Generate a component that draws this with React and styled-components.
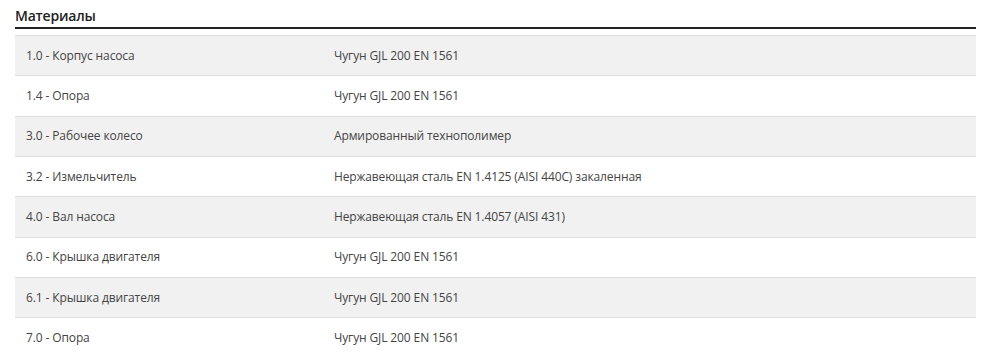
import React from "react";
import styled, { createGlobalStyle } from "styled-components";

const materials = [
  ["1.0 - Корпус насоса", "Чугун GJL 200 EN 1561"],
  ["1.4 - Опора", "Чугун GJL 200 EN 1561"],
  ["3.0 - Рабочее колесо", "Армированный технополимер"],
  ["3.2 - Измельчитель", "Нержавеющая сталь EN 1.4125 (AISI 440C) закаленная"],
  ["4.0 - Вал насоса", "Нержавеющая сталь EN 1.4057 (AISI 431)"],
  ["6.0 - Крышка двигателя", "Чугун GJL 200 EN 1561"],
  ["6.1 - Крышка двигателя", "Чугун GJL 200 EN 1561"],
  ["7.0 - Опора", "Чугун GJL 200 EN 1561"],
];

const App = () => {
  return (
    <>
      <GlobalStyle />
      <Section>
        <Heading>Материалы</Heading>
        <Table>
          {materials.map(([part, material], i) => (
            <Row key={i} $striped={i % 2 === 0}>
              <Cell>{part}</Cell>
              <Cell>{material}</Cell>
            </Row>
          ))}
        </Table>
      </Section>
    </>
  );
};

export default App;

const GlobalStyle = createGlobalStyle`
  body {
    margin: 0;
    background: #fff;
    font-family: "Open Sans", "Liberation Sans", sans-serif;
  }
`;

const Section = styled.div`
  padding: 6px 13px 0 15px;
`;

const Heading = styled.h3`
  margin: 0;
  padding-bottom: 2px;
  font-size: 14px;
  font-weight: 600;
  line-height: 19px;
  letter-spacing: -0.2px;
  color: #222;
  border-bottom: 2px solid #222;
`;

const Table = styled.div`
  margin-top: 6px;
`;

const Row = styled.div`
  display: grid;
  grid-template-columns: 308px 1fr;
  border-top: 1px solid #dedede;
  background: ${(p) => (p.$striped ? "#f1f1f1" : "#fff")};
`;

const Cell = styled.div`
  padding: 11.5px 11px;
  font-size: 12px;
  line-height: 16.34px;
  letter-spacing: -0.12px;
  color: #444;
`;
